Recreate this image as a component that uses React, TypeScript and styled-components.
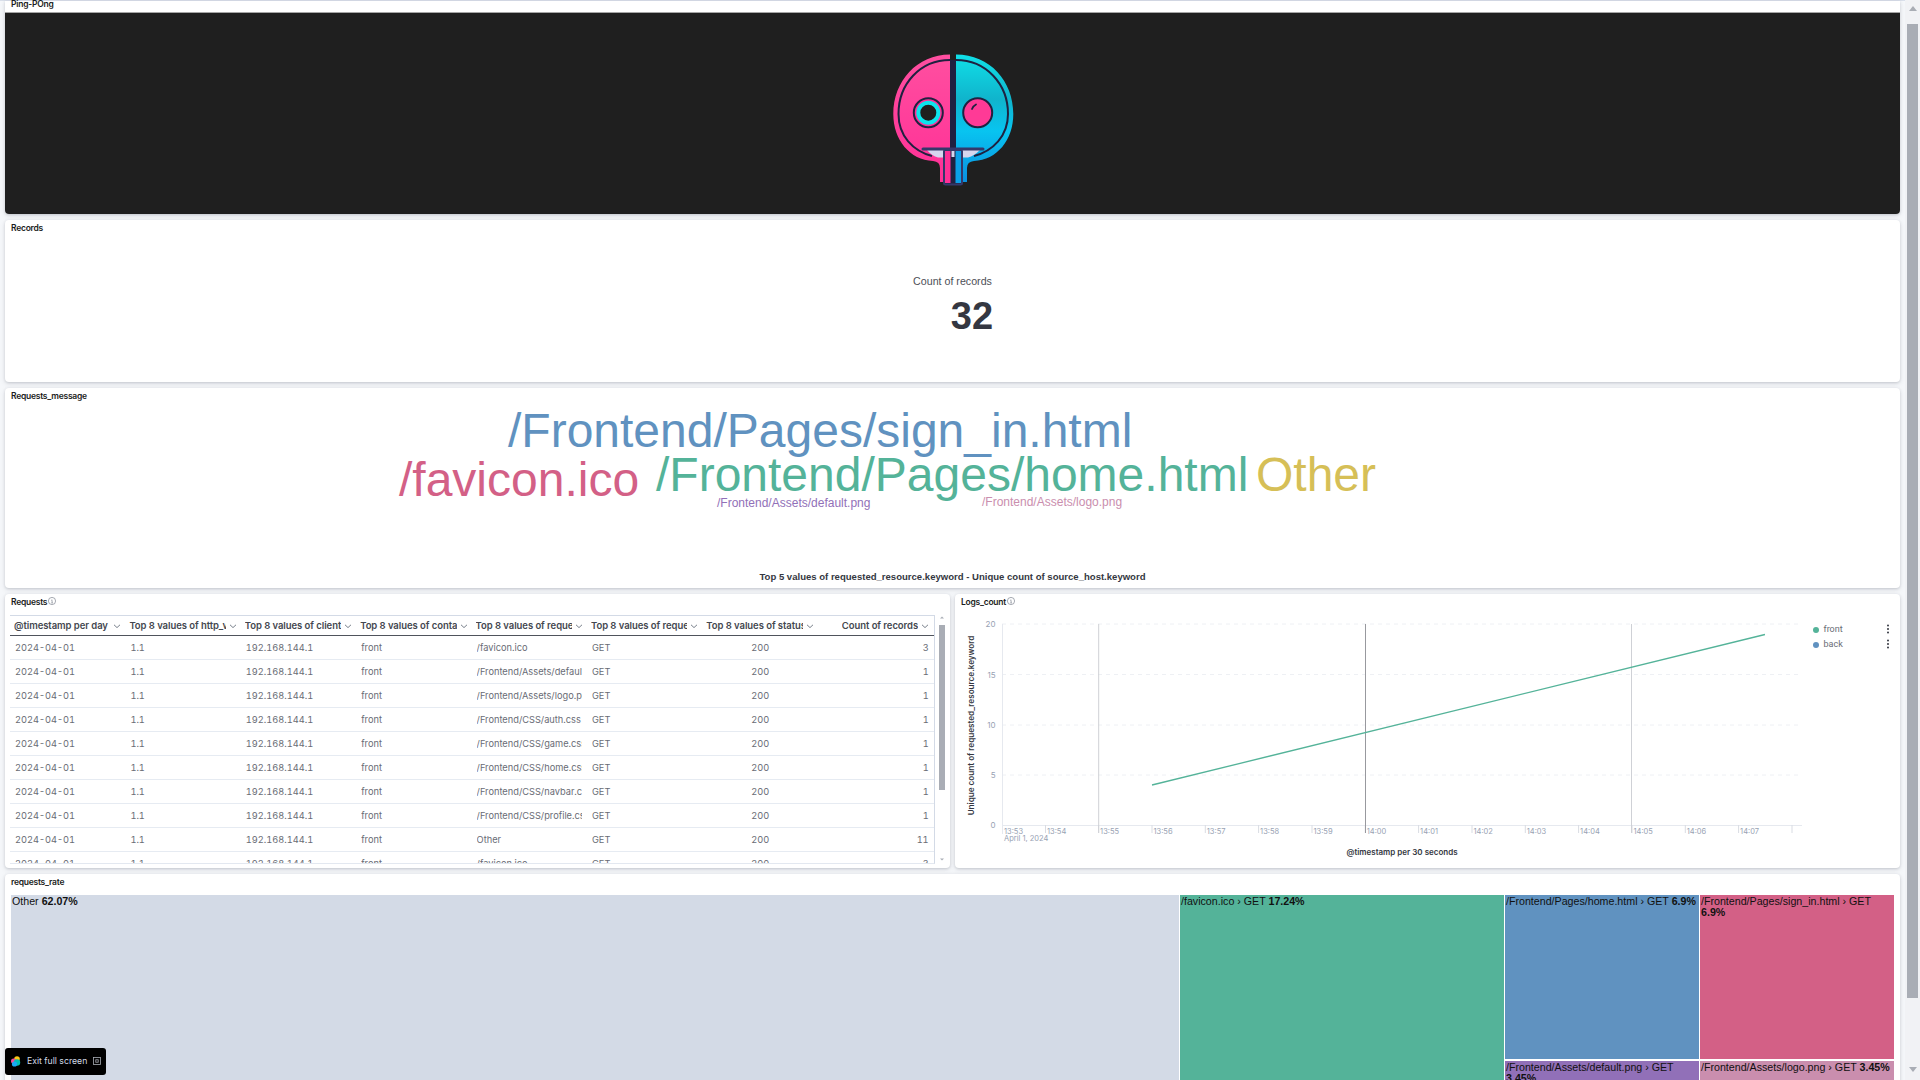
import React from "react";
import styled, { createGlobalStyle } from "styled-components";

const Global = createGlobalStyle`
  html, body { margin: 0; padding: 0; height: 100%; overflow: hidden; background: #f5f7fa; }
  body { font-family: Inter, "Liberation Sans", sans-serif; color: #343741; }
  #root { height: 100%; }
`;

const Page = styled.div`
  display: flex;
  width: 1920px;
  height: 1080px;
  overflow: hidden;
  background: #f5f7fa;
`;
const Dashboard = styled.main`
  width: 1895px;
  margin: 0 5px;
  display: flex;
  flex-direction: column;
  gap: 6px;
`;
const TopEdge = styled.div`
  flex: 0 0 1px;
  margin: 0 -5px -6px;
  background: #d9dfea;
`;
const Panel = styled.section<{ $h: number }>`
  flex: 0 0 ${(p) => p.$h}px;
  height: ${(p) => p.$h}px;
  display: flex;
  flex-direction: column;
  background: #fff;
  border-radius: 4px;
  box-shadow: 0 1px 3px rgba(60, 66, 80, 0.22), 0 2px 6px rgba(60, 66, 80, 0.08);
  min-width: 0;
`;
const ImagePanel = styled(Panel)`
  border-radius: 0 0 4px 4px;
`;
const PanelTitle = styled.h2<{ $h?: number; $lh?: number }>`
  flex: 0 0 ${(p) => p.$h ?? 16}px;
  margin: 0;
  padding-left: 6px;
  font-size: 8.5px;
  letter-spacing: -0.25px;
  font-weight: 600;
  line-height: ${(p) => p.$lh ?? 16}px;
  color: #1a1c21;
  display: flex;
  align-items: flex-start;
  gap: 1px;
`;
const Hero = styled.div`
  flex: 1;
  background: #1f1f1f;
  border-top: 1px solid #a5a5a5;
  border-radius: 0 0 4px 4px;
  display: flex;
  justify-content: center;
  align-items: flex-start;
  padding: 27px 0 0 5px;
`;
const MetricBody = styled.div`
  flex: 1;
  display: flex;
  flex-direction: column;
  align-items: center;
  padding-top: 38px;
  font-family: "Liberation Sans", Arial, sans-serif;
`;
const MetricLabel = styled.div`
  font-size: 10.67px;
  line-height: 14px;
  color: #4d4f57;
`;
const MetricValue = styled.div`
  font-size: 38px;
  line-height: 44px;
  font-weight: 700;
  color: #343741;
  margin: 6px 0 0 39px;
`;
const Cloud = styled.div`
  flex: 1;
  position: relative;
  font-family: "Liberation Sans", Arial, sans-serif;
`;
const Word = styled.span<{ $x: number; $base: number; $size: number; $color: string }>`
  position: absolute;
  left: ${(p) => p.$x - 5}px;
  top: ${(p) => p.$base - 404 - p.$size * 0.8465}px;
  font-size: ${(p) => p.$size}px;
  line-height: 1;
  white-space: nowrap;
  color: ${(p) => p.$color};
`;
const CloudCaption = styled.div`
  position: absolute;
  left: 0;
  right: 0;
  top: 166px;
  text-align: center;
  font-size: 9.55px;
  line-height: 14px;
  font-weight: 600;
  color: #343741;
`;
const Row = styled.div`
  flex: 0 0 274px;
  display: flex;
  gap: 5px;
`;
const HalfPanel = styled(Panel)`
  flex: 0 0 945px;
  height: 274px;
`;
const TableArea = styled.div`
  display: flex;
  padding: 5px 0 0 5px;
`;
const Table = styled.div`
  width: 924px;
  height: 247px;
  overflow: hidden;
  border-top: 1px solid #d3dae6;
  border-right: 1px solid #d3dae6;
  border-bottom: 1px solid #e3e8f0;
`;
const HeadRow = styled.div`
  display: grid;
  grid-template-columns: repeat(8, 115.4px);
  height: 19px;
  border-bottom: 1.5px solid #4f535c;
  align-items: center;
`;
const HeadCell = styled.div<{ $right?: boolean }>`
  display: flex;
  align-items: center;
  gap: 3px;
  padding: 0 4px;
  font-size: 9.5px;
  letter-spacing: -0.06px;
  font-weight: 600;
  color: #44474f;
  min-width: 0;
  justify-content: ${(p) => (p.$right ? "flex-end" : "flex-start")};
`;
const HeadText = styled.span<{ $right?: boolean }>`
  flex: ${(p) => (p.$right ? "0 0 auto" : "1 1 0")};
  overflow: hidden;
  white-space: nowrap;
`;
const BodyRow = styled.div`
  display: grid;
  grid-template-columns: repeat(8, 115.4px);
  height: 23px;
  border-bottom: 1px solid #e6ebf2;
  align-items: center;
`;
const BodyCell = styled.div<{ $align?: string }>`
  margin: 0 4.5px 0 5px;
  min-width: 0;
  font-size: 9.25px;
  font-variant-numeric: tabular-nums;
  color: #696c75;
  overflow: hidden;
  white-space: nowrap;
  text-align: ${(p) => p.$align ?? "left"};
`;
const MiniScroll = styled.div`
  width: 8px;
  margin-left: 3px;
  height: 247px;
  display: flex;
  flex-direction: column;
  align-items: center;
`;
const MiniThumb = styled.div`
  width: 6px;
  height: 165px;
  margin: 5px 0 auto;
  background: #a9adb5;
`;
const ChartArea = styled.div`
  display: flex;
  flex: 1;
`;
const ChartSvg = styled.svg`
  flex: 0 0 858px;
  display: block;
  font-family: Inter, sans-serif;
`;
const Legend = styled.div`
  flex: 1;
  padding: 7.5px 10px 0 0;
  display: flex;
  flex-direction: column;
`;
const LegendItem = styled.div`
  display: flex;
  align-items: center;
  height: 15px;
  font-size: 9px;
  color: #696c75;
  font-family: Roboto, sans-serif;
`;
const LegendDot = styled.i<{ $c: string }>`
  width: 6px;
  height: 6px;
  border-radius: 50%;
  background: ${(p) => p.$c};
  margin: 1px 4.5px 0 0;
`;
const Kebab = styled.svg`
  margin-left: auto;
  width: 4px;
  height: 10px;
`;
const Treemap = styled.div`
  margin: 0 6px;
  height: 300px;
  display: grid;
  grid-template-columns: 1168px 324px 194px 194px;
  grid-template-rows: 164px 1fr;
  column-gap: 1px;
  row-gap: 2px;
  font-family: "Liberation Sans", Arial, sans-serif;
  font-size: 10.67px;
  line-height: 11px;
`;
const Cell = styled.div<{ $bg: string; $tall?: boolean }>`
  background: ${(p) => p.$bg};
  padding: 1px 1px;
  grid-row: ${(p) => (p.$tall ? "1 / span 2" : "auto")};
  overflow: hidden;
  color: #111;
  b { font-weight: 700; }
`;
const ScrollBar = styled.aside`
  flex: 0 0 15px;
  background: #f1f2f5;
  display: flex;
  flex-direction: column;
  align-items: center;
  padding-top: 6px;
`;
const Arrow = styled.svg`
  width: 8px;
  height: 5px;
  flex: none;
`;
const Thumb = styled.div`
  width: 11px;
  height: 974px;
  margin: 13px 0 69px;
  background: #a9adb5;
`;
const ExitBar = styled.div`
  position: fixed;
  left: 5px;
  top: 1048px;
  width: 101px;
  height: 27px;
  box-sizing: border-box;
  background: #000;
  border-radius: 3px;
  display: flex;
  align-items: center;
  padding: 0 5px 1px 6px;
  font-size: 8.7px;
  color: #d3dae6;
  white-space: nowrap;
`;
const ExitLogo = styled.svg`
  flex: none;
  margin-right: 6px;
`;
const ExitIcon = styled.svg`
  margin-left: auto;
  flex: none;
`;
const InfoSvg = styled.svg`
  margin-top: 3px;
  flex: none;
`;
const ChevronSvg = styled.svg`
  flex: none;
`;

const InfoIcon = () => (
  <InfoSvg width="8" height="8" viewBox="0 0 8 8" fill="none" stroke="#69707d" strokeWidth="0.6">
    <circle cx="4" cy="4" r="3.6" />
    <path d="M3.4 3.4H4.1V6M3.4 6H4.8M3.9 2.2V2.6" />
  </InfoSvg>
);
const Chevron = () => (
  <ChevronSvg width="8" height="8" viewBox="0 0 8 8" fill="none" stroke="#69707d" strokeWidth="0.9">
    <path d="M1 2.8L4 5.6L7 2.8" />
  </ChevronSvg>
);
const Logo = () => (
  <svg width="150" height="160" viewBox="0 0 150 160">
    <defs>
      <linearGradient id="pink" x1="0" y1="0" x2="0" y2="1">
        <stop offset="0" stopColor="#ff4fa0" />
        <stop offset="1" stopColor="#ff2f96" />
      </linearGradient>
      <linearGradient id="blue" x1="0" y1="0" x2="0" y2="1">
        <stop offset="0" stopColor="#10e0e8" />
        <stop offset="0.35" stopColor="#10b4cc" />
        <stop offset="0.6" stopColor="#08c4f0" />
        <stop offset="1" stopColor="#0a8fe0" />
      </linearGradient>
    </defs>
    <path d="M70 14.4C37 14.4 13.3 41 13.3 74C13.3 100 30 120 53 121Q60 121.5 60 128V142H70Z" fill="url(#pink)" />
    <path d="M76 14.4C110 14.4 133.3 41 133.3 74C133.3 100 117 120 94 121Q87 121.5 87 128V142H76Z" fill="url(#blue)" />
    <path d="M70 20C40 20 18.5 44 18.5 74C18.5 96 33 111 52 116" fill="none" stroke="#1f2140" strokeWidth="2" />
    <path d="M76 20C106 20 128 44 128 74C128 96 113 111 94 116" fill="none" stroke="#1f2140" strokeWidth="2" />
    <rect x="70" y="20" width="6" height="90" fill="#1f2140" />
    <path d="M47 110H64V117.5H58Q52 116 47 110Z" fill="#d6d6ee" />
    <path d="M100 110H82V117.5H88Q94 116 100 110Z" fill="#d6d6ee" />
    <rect x="41.5" y="107.5" width="63" height="3" rx="1.5" fill="#34386a" />
    <rect x="64" y="110" width="18" height="34.5" rx="1.5" fill="#1f2140" stroke="#34386a" strokeWidth="2" />
    <rect x="65" y="111" width="5.5" height="32" fill="#ff2f96" />
    <rect x="75.5" y="111" width="5.5" height="32" fill="#0aa0e8" />
    <rect x="71.5" y="111" width="3" height="6" fill="#d6d6ee" />
    <circle cx="48.3" cy="72.7" r="14.5" fill="#ff2f96" stroke="#1f2140" strokeWidth="2" />
    <circle cx="48.3" cy="72.7" r="10" fill="#1f1f1f" stroke="#0ce4ec" strokeWidth="4" />
    <circle cx="97.7" cy="72.7" r="14.5" fill="#ff3a96" stroke="#1f2140" strokeWidth="2" />
    <path d="M92 69Q93 66 96 64.5" fill="none" stroke="#1f2140" strokeWidth="1.8" strokeLinecap="round" />
  </svg>
);

const requests = [
  ["/favicon.ico", 3],
  ["/Frontend/Assets/default.png", 1],
  ["/Frontend/Assets/logo.png", 1],
  ["/Frontend/CSS/auth.css", 1],
  ["/Frontend/CSS/game.css", 1],
  ["/Frontend/CSS/home.css", 1],
  ["/Frontend/CSS/navbar.css", 1],
  ["/Frontend/CSS/profile.css", 1],
  ["Other", 11],
  ["/favicon.ico", 3],
] as const;

const heads = ["@timestamp per day", "Top 8 values of http_version.keyword", "Top 8 values of client", "Top 8 values of container_name", "Top 8 values of requested_resource", "Top 8 values of request_method", "Top 8 values of status_code"];

const ticks = [1045.5, 1098.6, 1152, 1205.3, 1258.6, 1312, 1365.3, 1418.6, 1472, 1525.3, 1578.6, 1632, 1685.3, 1738.6, 1792];
const labels = ["13:54", "13:55", "13:56", "13:57", "13:58", "13:59", "14:00", "14:01", "14:02", "14:03", "14:04", "14:05", "14:06", "14:07"];
const X = (x: number) => x - 955;
const Y = (y: number) => y - 614;

const Chart = () => (
  <ChartSvg width="858" height="254" viewBox="0 0 858 254">
    {[624, 674.5, 725, 775].map((y) => (
      <line key={y} x1={X(1002)} x2={X(1802)} y1={Y(y)} y2={Y(y)} stroke="#eef0f4" strokeDasharray="4 4" />
    ))}
    <line x1={X(1002)} x2={X(1802)} y1={Y(825.5)} y2={Y(825.5)} stroke="#e6e9ef" />
    <line x1={X(1002.5)} x2={X(1002.5)} y1={Y(624)} y2={Y(834)} stroke="#e6e9ef" />
    {ticks.map((t) => (
      <line key={t} x1={X(t)} x2={X(t)} y1={Y(825)} y2={Y(833)} stroke="#d9dce3" />
    ))}
    <line x1={X(1098.7)} x2={X(1098.7)} y1={Y(624)} y2={Y(833)} stroke="#cfd1d6" strokeWidth="1" />
    <line x1={X(1365.5)} x2={X(1365.5)} y1={Y(624)} y2={Y(833)} stroke="#98999e" strokeWidth="1" />
    <line x1={X(1631.5)} x2={X(1631.5)} y1={Y(624)} y2={Y(833)} stroke="#cfd1d6" strokeWidth="1" />
    <line x1={X(1152)} y1={Y(785)} x2={X(1765)} y2={Y(634.5)} stroke="#54b399" strokeWidth="1.3" />
    {[["20", 624], ["15", 674.5], ["10", 725], ["5", 775], ["0", 825]].map(([l, y]) => (
      <text key={l} x={X(995.5)} y={Y(Number(y) + 3)} fontSize="8" textAnchor="end" fill="#98a2b3">{l}</text>
    ))}
    <text x={X(1004)} y={Y(833.5)} fontSize="7.5" fill="#98a2b3">13:53</text>
    <text x={X(1004)} y={Y(840.5)} fontSize="7.5" fill="#98a2b3">April 1, 2024</text>
    {labels.map((l, i) => (
      <text key={l} x={X(ticks[i] + 1.5)} y={Y(833.5)} fontSize="7.5" fill="#98a2b3">{l}</text>
    ))}
    <text transform={`translate(${X(974)} ${Y(725.5)}) rotate(-90)`} fontSize="8.15" fontWeight="600" textAnchor="middle" fill="#343741">Unique count of requested_resource.keyword</text>
    <text x={X(1402)} y={Y(855)} fontSize="8" fontWeight="600" textAnchor="middle" fill="#343741">@timestamp per 30 seconds</text>
  </ChartSvg>
);

const KebabIcon = () => (
  <Kebab viewBox="0 0 4 10">
    <circle cx="2" cy="1.4" r="1" fill="#343741" />
    <circle cx="2" cy="5" r="1" fill="#343741" />
    <circle cx="2" cy="8.6" r="1" fill="#343741" />
  </Kebab>
);

export default function App() {
  return (
    <Page>
      <Global />
      <Dashboard>
        <TopEdge />
        <ImagePanel $h={213}>
          <PanelTitle $h={11} $lh={7}>Ping-POng</PanelTitle>
          <Hero><Logo /></Hero>
        </ImagePanel>
        <Panel $h={162}>
          <PanelTitle>Records</PanelTitle>
          <MetricBody>
            <MetricLabel>Count of records</MetricLabel>
            <MetricValue>32</MetricValue>
          </MetricBody>
        </Panel>
        <Panel $h={200}>
          <PanelTitle>Requests_message</PanelTitle>
          <Cloud>
            <Word $x={508} $base={448} $size={48} $color="#6092c0">/Frontend/Pages/sign_in.html</Word>
            <Word $x={399} $base={497} $size={48} $color="#d36086">/favicon.ico</Word>
            <Word $x={656} $base={492} $size={48} $color="#54b399">/Frontend/Pages/home.html</Word>
            <Word $x={1256} $base={492} $size={48} $color="#d6bf57">Other</Word>
            <Word $x={717} $base={507} $size={12} $color="#9170b8">/Frontend/Assets/default.png</Word>
            <Word $x={982} $base={506} $size={12} $color="#ca8eae">/Frontend/Assets/logo.png</Word>
            <CloudCaption>Top 5 values of requested_resource.keyword - Unique count of source_host.keyword</CloudCaption>
          </Cloud>
        </Panel>
        <Row>
          <HalfPanel $h={274}>
            <PanelTitle>Requests<InfoIcon /></PanelTitle>
            <TableArea>
              <Table>
                <HeadRow>
                  {heads.map((h) => (
                    <HeadCell key={h}><HeadText>{h}</HeadText><Chevron /></HeadCell>
                  ))}
                  <HeadCell $right><HeadText $right>Count of records</HeadText><Chevron /></HeadCell>
                </HeadRow>
                {requests.map(([res, n], i) => (
                  <BodyRow key={i}>
                    <BodyCell>2024-04-01</BodyCell>
                    <BodyCell>1.1</BodyCell>
                    <BodyCell>192.168.144.1</BodyCell>
                    <BodyCell>front</BodyCell>
                    <BodyCell>{res}</BodyCell>
                    <BodyCell>GET</BodyCell>
                    <BodyCell $align="center">200</BodyCell>
                    <BodyCell $align="right">{n}</BodyCell>
                  </BodyRow>
                ))}
              </Table>
              <MiniScroll>
                <Arrow viewBox="0 0 8 5"><path d="M4 1.5L6 3.5H2Z" fill="#a9adb5" /></Arrow>
                <MiniThumb />
                <Arrow viewBox="0 0 8 5"><path d="M4 3.5L6 1.5H2Z" fill="#a9adb5" /></Arrow>
              </MiniScroll>
            </TableArea>
          </HalfPanel>
          <HalfPanel $h={274}>
            <PanelTitle $h={20}>Logs_count<InfoIcon /></PanelTitle>
            <ChartArea>
              <Chart />
              <Legend>
                <LegendItem><LegendDot $c="#54b399" />front<KebabIcon /></LegendItem>
                <LegendItem><LegendDot $c="#6092c0" />back<KebabIcon /></LegendItem>
              </Legend>
            </ChartArea>
          </HalfPanel>
        </Row>
        <Panel $h={320}>
          <PanelTitle $h={21}>requests_rate</PanelTitle>
          <Treemap>
            <Cell $bg="#d3dae6" $tall>Other <b>62.07%</b></Cell>
            <Cell $bg="#54b399" $tall>/favicon.ico › GET <b>17.24%</b></Cell>
            <Cell $bg="#6092c0">/Frontend/Pages/home.html › GET <b>6.9%</b></Cell>
            <Cell $bg="#d36086">/Frontend/Pages/sign_in.html › GET <b>6.9%</b></Cell>
            <Cell $bg="#9170b8">/Frontend/Assets/default.png › GET <b>3.45%</b></Cell>
            <Cell $bg="#ca8eae">/Frontend/Assets/logo.png › GET <b>3.45%</b></Cell>
          </Treemap>
        </Panel>
      </Dashboard>
      <ScrollBar>
        <Arrow viewBox="0 0 8 5"><path d="M4 0L8 5H0Z" fill="#a9adb5" /></Arrow>
        <Thumb />
        <Arrow viewBox="0 0 8 5"><path d="M4 5L8 0H0Z" fill="#a9adb5" /></Arrow>
      </ScrollBar>
      <ExitBar>
        <ExitLogo width="10" height="11" viewBox="0 0 10 11">
          <circle cx="6" cy="3" r="2.8" fill="#fec514" />
          <circle cx="2.6" cy="5" r="2.6" fill="#f04e98" />
          <circle cx="6" cy="6.5" r="3.2" fill="#00bfb3" />
          <circle cx="3.5" cy="8" r="2.6" fill="#1ba9f5" />
        </ExitLogo>
        <span>Exit full screen</span>
        <ExitIcon width="8" height="8" viewBox="0 0 8 8" fill="none" stroke="#a9adb5" strokeWidth="0.8">
          <rect x="0.5" y="0.5" width="7" height="7" />
          <rect x="2.8" y="2.8" width="2.4" height="2.4" />
        </ExitIcon>
      </ExitBar>
    </Page>
  );
}
